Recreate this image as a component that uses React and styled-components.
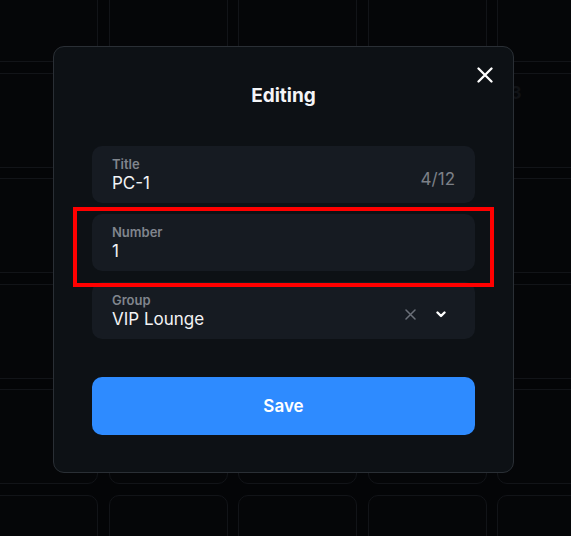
import React from "react";
import styled, { createGlobalStyle } from "styled-components";

const GlobalStyle = createGlobalStyle`
  html, body {
    margin: 0;
    padding: 0;
    background: #040507;
    font-family: Inter, "Noto Sans", sans-serif;
    overflow: hidden;
  }
`;

const Page = styled.div`
  position: relative;
  width: 571px;
  height: 536px;
  overflow: hidden;
  background: #040507;
`;

const CardGrid = styled.div`
  display: grid;
  grid-template-columns: repeat(5, 119px);
  grid-auto-rows: 95px;
  column-gap: 10.5px;
  row-gap: 10.5px;
  margin: -33px 0 0 -21px;
`;

const GhostCard = styled.div`
  border: 1px solid #121418;
  border-radius: 10px;
  background: #050608;
  padding: 8px 0 0 12px;
  color: #101215;
  font-size: 18px;
  font-weight: 700;
`;

const Overlay = styled.div`
  position: absolute;
  inset: 0;
  display: flex;
  align-items: flex-start;
  padding: 46px 0 0 53px;
`;

const Modal = styled.div`
  position: relative;
  box-sizing: border-box;
  width: 461px;
  height: 427px;
  background: #0d1115;
  border: 1px solid #2a2f35;
  border-radius: 11px;
  padding: 37px 38px 0;
  display: flex;
  flex-direction: column;
`;

const Heading = styled.h2`
  margin: 0;
  text-align: center;
  color: #f4f5f7;
  font-size: 19px;
  line-height: 24px;
  font-weight: 700;
`;

const CloseButton = styled.button`
  position: absolute;
  top: 20px;
  right: 20px;
  width: 16px;
  height: 16px;
  padding: 0;
  border: 0;
  background: none;
  display: flex;
  cursor: pointer;
`;

const Fields = styled.div`
  display: flex;
  flex-direction: column;
  gap: 11px;
  margin-top: 38px;
`;

const Field = styled.div`
  box-sizing: border-box;
  height: 57px;
  background: #161b22;
  border-radius: 10px;
  padding: 10px 20px 9px;
  display: flex;
  align-items: center;
  gap: 12px;
`;

const FieldBody = styled.div`
  flex: 1;
  display: flex;
  flex-direction: column;
`;

const Label = styled.span`
  font-size: 13px;
  line-height: 16px;
  font-weight: 600;
  color: #80858d;
`;

const Value = styled.span`
  font-size: 17px;
  line-height: 22px;
  color: #f2f3f5;
`;

const Counter = styled.span`
  font-size: 17px;
  color: #7c8088;
  margin-top: 8px;
`;

const Actions = styled.div`
  display: flex;
  align-items: center;
  gap: 20px;
  margin-top: 6px;
  padding-right: 9px;
`;

const SaveButton = styled.button`
  margin-top: 38px;
  height: 58px;
  border: 0;
  border-radius: 10px;
  background: #2e8bff;
  color: #ffffff;
  font-family: inherit;
  font-size: 17px;
  font-weight: 600;
  cursor: pointer;
`;

const Highlight = styled.div`
  position: absolute;
  left: 73px;
  top: 207px;
  width: 421px;
  height: 80px;
  box-sizing: border-box;
  border: 4px solid #ff0000;
  pointer-events: none;
`;

const CloseIcon = () => (
  <svg width="16" height="16" viewBox="0 0 16 16">
    <path d="M1.5 1.5 L14.5 14.5 M14.5 1.5 L1.5 14.5" stroke="#ffffff" strokeWidth="2.3" strokeLinecap="round" />
  </svg>
);

const ClearIcon = () => (
  <svg width="11" height="11" viewBox="0 0 11 11">
    <path d="M1 1 L10 10 M10 1 L1 10" stroke="#6b7079" strokeWidth="1.5" strokeLinecap="round" />
  </svg>
);

const ChevronIcon = () => (
  <svg width="10" height="7" viewBox="0 0 10 7">
    <path d="M1.5 1.5 L5 5 L8.5 1.5" stroke="#ffffff" strokeWidth="2.4" fill="none" strokeLinecap="round" strokeLinejoin="round" />
  </svg>
);

const ghostCards = Array.from({ length: 30 }, (_, i) => (i === 9 ? "3" : ""));

export default function App() {
  return (
    <Page>
      <GlobalStyle />
      <CardGrid>
        {ghostCards.map((label, i) => (
          <GhostCard key={i}>{label}</GhostCard>
        ))}
      </CardGrid>
      <Overlay>
        <Modal>
          <CloseButton aria-label="Close">
            <CloseIcon />
          </CloseButton>
          <Heading>Editing</Heading>
          <Fields>
            <Field>
              <FieldBody>
                <Label>Title</Label>
                <Value>PC-1</Value>
              </FieldBody>
              <Counter>4/12</Counter>
            </Field>
            <Field>
              <FieldBody>
                <Label>Number</Label>
                <Value>1</Value>
              </FieldBody>
            </Field>
            <Field>
              <FieldBody>
                <Label>Group</Label>
                <Value>VIP Lounge</Value>
              </FieldBody>
              <Actions>
                <ClearIcon />
                <ChevronIcon />
              </Actions>
            </Field>
          </Fields>
          <SaveButton>Save</SaveButton>
        </Modal>
      </Overlay>
      <Highlight />
    </Page>
  );
}
